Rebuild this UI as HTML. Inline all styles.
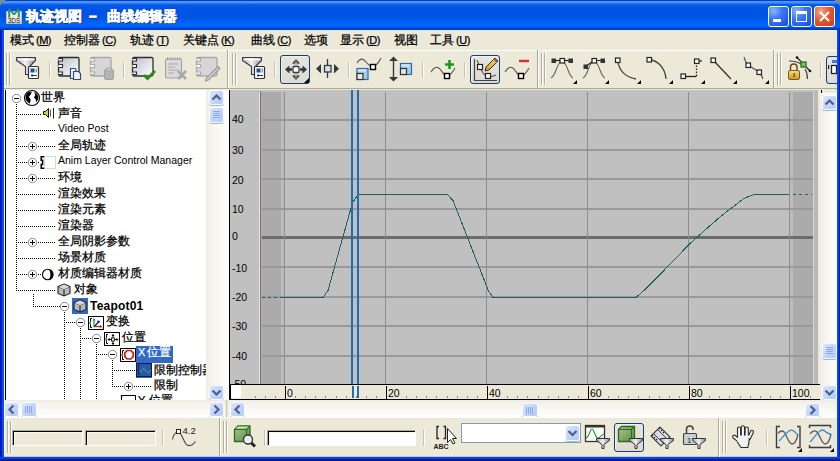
<!DOCTYPE html><html><head><meta charset="utf-8"><style>
*{box-sizing:border-box}
html,body{margin:0;padding:0;width:840px;height:461px;overflow:hidden;background:#808080}
body{position:relative;font-family:"Liberation Sans",sans-serif;font-size:11px;color:#000}
.a{position:absolute}
svg{position:absolute;overflow:visible}
.cj{font-size:12px;line-height:14px;white-space:nowrap;-webkit-text-stroke:0.25px currentColor}
.t11{font-size:10.5px;line-height:13px;white-space:nowrap}
</style></head><body>
<div class="a" style="left:0;top:0;width:840px;height:461px;background:#0a4fe0;border-radius:7px 7px 0 0;overflow:hidden">
<div class="a" style="left:0;top:0;width:840px;height:30px;background:linear-gradient(180deg,#0a3ac0 0px,#0a3ac0 1px,#4c9cff 1px,#3a8cf6 3px,#0c5de8 4.5px,#0054e3 8px,#0054e3 17px,#005ef2 21px,#0066ff 25px,#0062f8 27px,#0048d4 28px,#0036b4 30px)"></div>
<div class="a" style="left:0;top:30px;width:4px;height:431px;background:linear-gradient(90deg,#0014b8 0px,#0020c8 2px,#0050ee 2px,#0852f2 4px)"></div>
<div class="a" style="left:837px;top:30px;width:3px;height:431px;background:linear-gradient(90deg,#0850f0 0px,#0850f0 1px,#0040e0 1px,#0040e0 2px,#0020c0 2px)"></div>
<div class="a" style="left:0;top:457px;width:840px;height:4px;background:linear-gradient(180deg,#0846f0 0px,#0846f0 1px,#0a3ad8 1px,#0a3ad8 2px,#0624a8 2px,#0624a8 3px,#041888 3px)"></div>
</div>
<svg style="left:0;top:0" width="8" height="8"><path d="M0 0H5V1H3V2H2V3H1V5H0Z" fill="#8a8a7a"/></svg>
<svg style="left:832px;top:0" width="8" height="8"><path d="M8 0H3V1H5V2H6V3H7V5H8Z" fill="#8a8a7a"/></svg>
<div class="a" style="left:6px;top:11px;width:16px;height:13px;background:#eeeae0;border:1px solid #c0b8a0"></div>
<svg style="left:6px;top:7px" width="16" height="18"><path d="M3.2 10.5V2L8 7.5L12.8 2V10.5" stroke="#1f9080" stroke-width="1.9" fill="none" stroke-linejoin="bevel"/><text x="8" y="16.3" font-size="6.5" font-family="Liberation Sans" text-anchor="middle" fill="#111">3DS</text></svg>
<div class="a" style="left:26px;top:8px;font-size:14px;font-weight:bold;color:#fff;-webkit-text-stroke:0.6px #fff;text-shadow:1px 1px 0 #0a1e80;line-height:16px;white-space:nowrap">轨迹视图</div>
<div class="a" style="left:89px;top:8px;font-size:14px;font-weight:bold;color:#fff;-webkit-text-stroke:0.6px #fff;text-shadow:1px 1px 0 #0a1e80;line-height:16px;white-space:nowrap">–</div>
<div class="a" style="left:107px;top:8px;font-size:14px;font-weight:bold;color:#fff;-webkit-text-stroke:0.6px #fff;text-shadow:1px 1px 0 #0a1e80;line-height:16px;white-space:nowrap">曲线编辑器</div>
<div class="a" style="left:768px;top:6px;width:21px;height:21px;border:1px solid #fff;border-radius:3px;background:radial-gradient(circle at 25% 20%,#8cb4ff 0%,#3a78f8 40%,#2258e8 80%,#1a4cd8 100%)"></div>
<div class="a" style="left:791px;top:6px;width:21px;height:21px;border:1px solid #fff;border-radius:3px;background:radial-gradient(circle at 25% 20%,#8cb4ff 0%,#3a78f8 40%,#2258e8 80%,#1a4cd8 100%)"></div>
<div class="a" style="left:814px;top:6px;width:21px;height:21px;border:1px solid #fff;border-radius:3px;background:radial-gradient(circle at 30% 25%,#f4a88a 0%,#e25a2e 45%,#c93f16 100%)"></div>
<div class="a" style="left:773px;top:19px;width:8px;height:3px;background:#fff"></div>
<div class="a" style="left:796px;top:11px;width:11px;height:11px;border:1px solid #fff;border-top-width:3px"></div>
<svg style="left:814px;top:6px" width="21" height="21"><path d="M6 6L15 15M15 6L6 15" stroke="#fff" stroke-width="2"/></svg>
<div class="a" style="left:4px;top:30px;width:833px;height:427px;background:#ece9d8"></div>
<div class="a cj" style="left:10px;top:33px">模式<span style="font-size:11px;letter-spacing:-0.5px;margin-left:2px">(<u>M</u>)</span></div>
<div class="a cj" style="left:64px;top:33px">控制器<span style="font-size:11px;letter-spacing:-0.5px;margin-left:2px">(<u>C</u>)</span></div>
<div class="a cj" style="left:130px;top:33px">轨迹<span style="font-size:11px;letter-spacing:-0.5px;margin-left:2px">(<u>T</u>)</span></div>
<div class="a cj" style="left:183px;top:33px">关键点<span style="font-size:11px;letter-spacing:-0.5px;margin-left:2px">(<u>K</u>)</span></div>
<div class="a cj" style="left:251px;top:33px">曲线<span style="font-size:11px;letter-spacing:-0.5px;margin-left:2px">(<u>C</u>)</span></div>
<div class="a cj" style="left:304px;top:33px">选项</div>
<div class="a cj" style="left:340px;top:33px">显示<span style="font-size:11px;letter-spacing:-0.5px;margin-left:2px">(<u>D</u>)</span></div>
<div class="a cj" style="left:394px;top:33px">视图</div>
<div class="a cj" style="left:430px;top:33px">工具<span style="font-size:11px;letter-spacing:-0.5px;margin-left:2px">(<u>U</u>)</span></div>
<div class="a" style="left:4px;top:50px;width:833px;height:1px;background:#fff"></div>
<div class="a" style="left:4px;top:30px;width:1px;height:427px;background:#faf8f0"></div>
<div class="a" style="left:6px;top:53px;width:1px;height:32px;background:#b4b09f"></div>
<div class="a" style="left:7px;top:53px;width:1px;height:32px;background:#fff"></div>
<div class="a" style="left:9px;top:53px;width:1px;height:32px;background:#b4b09f"></div>
<div class="a" style="left:10px;top:53px;width:1px;height:32px;background:#fff"></div>
<div class="a" style="left:49px;top:62px;width:1px;height:16px;background:#c5c2b2"></div>
<div class="a" style="left:50px;top:62px;width:1px;height:16px;background:#fff"></div>
<div class="a" style="left:123px;top:62px;width:1px;height:16px;background:#c5c2b2"></div>
<div class="a" style="left:124px;top:62px;width:1px;height:16px;background:#fff"></div>
<div class="a" style="left:227px;top:50px;width:1px;height:39px;background:#aca899"></div>
<div class="a" style="left:228px;top:50px;width:1px;height:39px;background:#fff"></div>
<div class="a" style="left:232px;top:53px;width:1px;height:32px;background:#b4b09f"></div>
<div class="a" style="left:233px;top:53px;width:1px;height:32px;background:#fff"></div>
<div class="a" style="left:235px;top:53px;width:1px;height:32px;background:#b4b09f"></div>
<div class="a" style="left:236px;top:53px;width:1px;height:32px;background:#fff"></div>
<div class="a" style="left:274px;top:62px;width:1px;height:16px;background:#c5c2b2"></div>
<div class="a" style="left:275px;top:62px;width:1px;height:16px;background:#fff"></div>
<div class="a" style="left:348px;top:62px;width:1px;height:16px;background:#c5c2b2"></div>
<div class="a" style="left:349px;top:62px;width:1px;height:16px;background:#fff"></div>
<div class="a" style="left:537px;top:50px;width:1px;height:39px;background:#aca899"></div>
<div class="a" style="left:538px;top:50px;width:1px;height:39px;background:#fff"></div>
<div class="a" style="left:541px;top:53px;width:1px;height:32px;background:#b4b09f"></div>
<div class="a" style="left:542px;top:53px;width:1px;height:32px;background:#fff"></div>
<div class="a" style="left:544px;top:53px;width:1px;height:32px;background:#b4b09f"></div>
<div class="a" style="left:545px;top:53px;width:1px;height:32px;background:#fff"></div>
<div class="a" style="left:773px;top:50px;width:1px;height:39px;background:#aca899"></div>
<div class="a" style="left:774px;top:50px;width:1px;height:39px;background:#fff"></div>
<div class="a" style="left:777px;top:53px;width:1px;height:32px;background:#b4b09f"></div>
<div class="a" style="left:778px;top:53px;width:1px;height:32px;background:#fff"></div>
<div class="a" style="left:780px;top:53px;width:1px;height:32px;background:#b4b09f"></div>
<div class="a" style="left:781px;top:53px;width:1px;height:32px;background:#fff"></div>
<div class="a" style="left:820px;top:62px;width:1px;height:16px;background:#c5c2b2"></div>
<div class="a" style="left:821px;top:62px;width:1px;height:16px;background:#fff"></div>
<div class="a" style="left:4px;top:88px;width:833px;height:1px;background:#aca899"></div>
<div class="a" style="left:5px;top:90px;width:201px;height:310px;background:#fff;border-left:1px solid #000;overflow:hidden">
<svg style="left:-1px;top:0" width="201" height="310"><g fill="#000"><rect x="11" y="14" width="1" height="1"/><rect x="11" y="16" width="1" height="1"/><rect x="11" y="18" width="1" height="1"/><rect x="11" y="20" width="1" height="1"/><rect x="11" y="22" width="1" height="1"/><rect x="11" y="24" width="1" height="1"/><rect x="11" y="26" width="1" height="1"/><rect x="11" y="28" width="1" height="1"/><rect x="11" y="30" width="1" height="1"/><rect x="11" y="32" width="1" height="1"/><rect x="11" y="34" width="1" height="1"/><rect x="11" y="36" width="1" height="1"/><rect x="11" y="38" width="1" height="1"/><rect x="11" y="40" width="1" height="1"/><rect x="11" y="42" width="1" height="1"/><rect x="11" y="44" width="1" height="1"/><rect x="11" y="46" width="1" height="1"/><rect x="11" y="48" width="1" height="1"/><rect x="11" y="50" width="1" height="1"/><rect x="11" y="52" width="1" height="1"/><rect x="11" y="54" width="1" height="1"/><rect x="11" y="56" width="1" height="1"/><rect x="11" y="58" width="1" height="1"/><rect x="11" y="60" width="1" height="1"/><rect x="11" y="62" width="1" height="1"/><rect x="11" y="64" width="1" height="1"/><rect x="11" y="66" width="1" height="1"/><rect x="11" y="68" width="1" height="1"/><rect x="11" y="70" width="1" height="1"/><rect x="11" y="72" width="1" height="1"/><rect x="11" y="74" width="1" height="1"/><rect x="11" y="76" width="1" height="1"/><rect x="11" y="78" width="1" height="1"/><rect x="11" y="80" width="1" height="1"/><rect x="11" y="82" width="1" height="1"/><rect x="11" y="84" width="1" height="1"/><rect x="11" y="86" width="1" height="1"/><rect x="11" y="88" width="1" height="1"/><rect x="11" y="90" width="1" height="1"/><rect x="11" y="92" width="1" height="1"/><rect x="11" y="94" width="1" height="1"/><rect x="11" y="96" width="1" height="1"/><rect x="11" y="98" width="1" height="1"/><rect x="11" y="100" width="1" height="1"/><rect x="11" y="102" width="1" height="1"/><rect x="11" y="104" width="1" height="1"/><rect x="11" y="106" width="1" height="1"/><rect x="11" y="108" width="1" height="1"/><rect x="11" y="110" width="1" height="1"/><rect x="11" y="112" width="1" height="1"/><rect x="11" y="114" width="1" height="1"/><rect x="11" y="116" width="1" height="1"/><rect x="11" y="118" width="1" height="1"/><rect x="11" y="120" width="1" height="1"/><rect x="11" y="122" width="1" height="1"/><rect x="11" y="124" width="1" height="1"/><rect x="11" y="126" width="1" height="1"/><rect x="11" y="128" width="1" height="1"/><rect x="11" y="130" width="1" height="1"/><rect x="11" y="132" width="1" height="1"/><rect x="11" y="134" width="1" height="1"/><rect x="11" y="136" width="1" height="1"/><rect x="11" y="138" width="1" height="1"/><rect x="11" y="140" width="1" height="1"/><rect x="11" y="142" width="1" height="1"/><rect x="11" y="144" width="1" height="1"/><rect x="11" y="146" width="1" height="1"/><rect x="11" y="148" width="1" height="1"/><rect x="11" y="150" width="1" height="1"/><rect x="11" y="152" width="1" height="1"/><rect x="11" y="154" width="1" height="1"/><rect x="11" y="156" width="1" height="1"/><rect x="11" y="158" width="1" height="1"/><rect x="11" y="160" width="1" height="1"/><rect x="11" y="162" width="1" height="1"/><rect x="11" y="164" width="1" height="1"/><rect x="11" y="166" width="1" height="1"/><rect x="11" y="168" width="1" height="1"/><rect x="11" y="170" width="1" height="1"/><rect x="11" y="172" width="1" height="1"/><rect x="11" y="174" width="1" height="1"/><rect x="11" y="176" width="1" height="1"/><rect x="11" y="178" width="1" height="1"/><rect x="11" y="180" width="1" height="1"/><rect x="11" y="182" width="1" height="1"/><rect x="11" y="184" width="1" height="1"/><rect x="11" y="186" width="1" height="1"/><rect x="11" y="188" width="1" height="1"/><rect x="11" y="190" width="1" height="1"/><rect x="11" y="192" width="1" height="1"/><rect x="11" y="194" width="1" height="1"/><rect x="11" y="196" width="1" height="1"/><rect x="11" y="198" width="1" height="1"/><rect x="11" y="200" width="1" height="1"/><rect x="11" y="24" width="1" height="1"/><rect x="13" y="24" width="1" height="1"/><rect x="15" y="24" width="1" height="1"/><rect x="17" y="24" width="1" height="1"/><rect x="19" y="24" width="1" height="1"/><rect x="21" y="24" width="1" height="1"/><rect x="23" y="24" width="1" height="1"/><rect x="25" y="24" width="1" height="1"/><rect x="27" y="24" width="1" height="1"/><rect x="29" y="24" width="1" height="1"/><rect x="31" y="24" width="1" height="1"/><rect x="33" y="24" width="1" height="1"/><rect x="35" y="24" width="1" height="1"/><rect x="11" y="40" width="1" height="1"/><rect x="13" y="40" width="1" height="1"/><rect x="15" y="40" width="1" height="1"/><rect x="17" y="40" width="1" height="1"/><rect x="19" y="40" width="1" height="1"/><rect x="21" y="40" width="1" height="1"/><rect x="23" y="40" width="1" height="1"/><rect x="25" y="40" width="1" height="1"/><rect x="27" y="40" width="1" height="1"/><rect x="29" y="40" width="1" height="1"/><rect x="31" y="40" width="1" height="1"/><rect x="33" y="40" width="1" height="1"/><rect x="35" y="40" width="1" height="1"/><rect x="37" y="40" width="1" height="1"/><rect x="39" y="40" width="1" height="1"/><rect x="41" y="40" width="1" height="1"/><rect x="43" y="40" width="1" height="1"/><rect x="45" y="40" width="1" height="1"/><rect x="47" y="40" width="1" height="1"/><rect x="49" y="40" width="1" height="1"/><rect x="11" y="56" width="1" height="1"/><rect x="13" y="56" width="1" height="1"/><rect x="15" y="56" width="1" height="1"/><rect x="17" y="56" width="1" height="1"/><rect x="19" y="56" width="1" height="1"/><rect x="21" y="56" width="1" height="1"/><rect x="33" y="56" width="1" height="1"/><rect x="35" y="56" width="1" height="1"/><rect x="37" y="56" width="1" height="1"/><rect x="39" y="56" width="1" height="1"/><rect x="41" y="56" width="1" height="1"/><rect x="43" y="56" width="1" height="1"/><rect x="45" y="56" width="1" height="1"/><rect x="47" y="56" width="1" height="1"/><rect x="49" y="56" width="1" height="1"/><rect x="11" y="72" width="1" height="1"/><rect x="13" y="72" width="1" height="1"/><rect x="15" y="72" width="1" height="1"/><rect x="17" y="72" width="1" height="1"/><rect x="19" y="72" width="1" height="1"/><rect x="21" y="72" width="1" height="1"/><rect x="33" y="72" width="1" height="1"/><rect x="11" y="88" width="1" height="1"/><rect x="13" y="88" width="1" height="1"/><rect x="15" y="88" width="1" height="1"/><rect x="17" y="88" width="1" height="1"/><rect x="19" y="88" width="1" height="1"/><rect x="21" y="88" width="1" height="1"/><rect x="33" y="88" width="1" height="1"/><rect x="35" y="88" width="1" height="1"/><rect x="37" y="88" width="1" height="1"/><rect x="39" y="88" width="1" height="1"/><rect x="41" y="88" width="1" height="1"/><rect x="43" y="88" width="1" height="1"/><rect x="45" y="88" width="1" height="1"/><rect x="47" y="88" width="1" height="1"/><rect x="49" y="88" width="1" height="1"/><rect x="11" y="104" width="1" height="1"/><rect x="13" y="104" width="1" height="1"/><rect x="15" y="104" width="1" height="1"/><rect x="17" y="104" width="1" height="1"/><rect x="19" y="104" width="1" height="1"/><rect x="21" y="104" width="1" height="1"/><rect x="23" y="104" width="1" height="1"/><rect x="25" y="104" width="1" height="1"/><rect x="27" y="104" width="1" height="1"/><rect x="29" y="104" width="1" height="1"/><rect x="31" y="104" width="1" height="1"/><rect x="33" y="104" width="1" height="1"/><rect x="35" y="104" width="1" height="1"/><rect x="37" y="104" width="1" height="1"/><rect x="39" y="104" width="1" height="1"/><rect x="41" y="104" width="1" height="1"/><rect x="43" y="104" width="1" height="1"/><rect x="45" y="104" width="1" height="1"/><rect x="47" y="104" width="1" height="1"/><rect x="49" y="104" width="1" height="1"/><rect x="11" y="120" width="1" height="1"/><rect x="13" y="120" width="1" height="1"/><rect x="15" y="120" width="1" height="1"/><rect x="17" y="120" width="1" height="1"/><rect x="19" y="120" width="1" height="1"/><rect x="21" y="120" width="1" height="1"/><rect x="23" y="120" width="1" height="1"/><rect x="25" y="120" width="1" height="1"/><rect x="27" y="120" width="1" height="1"/><rect x="29" y="120" width="1" height="1"/><rect x="31" y="120" width="1" height="1"/><rect x="33" y="120" width="1" height="1"/><rect x="35" y="120" width="1" height="1"/><rect x="37" y="120" width="1" height="1"/><rect x="39" y="120" width="1" height="1"/><rect x="41" y="120" width="1" height="1"/><rect x="43" y="120" width="1" height="1"/><rect x="45" y="120" width="1" height="1"/><rect x="47" y="120" width="1" height="1"/><rect x="49" y="120" width="1" height="1"/><rect x="11" y="136" width="1" height="1"/><rect x="13" y="136" width="1" height="1"/><rect x="15" y="136" width="1" height="1"/><rect x="17" y="136" width="1" height="1"/><rect x="19" y="136" width="1" height="1"/><rect x="21" y="136" width="1" height="1"/><rect x="23" y="136" width="1" height="1"/><rect x="25" y="136" width="1" height="1"/><rect x="27" y="136" width="1" height="1"/><rect x="29" y="136" width="1" height="1"/><rect x="31" y="136" width="1" height="1"/><rect x="33" y="136" width="1" height="1"/><rect x="35" y="136" width="1" height="1"/><rect x="37" y="136" width="1" height="1"/><rect x="39" y="136" width="1" height="1"/><rect x="41" y="136" width="1" height="1"/><rect x="43" y="136" width="1" height="1"/><rect x="45" y="136" width="1" height="1"/><rect x="47" y="136" width="1" height="1"/><rect x="49" y="136" width="1" height="1"/><rect x="11" y="152" width="1" height="1"/><rect x="13" y="152" width="1" height="1"/><rect x="15" y="152" width="1" height="1"/><rect x="17" y="152" width="1" height="1"/><rect x="19" y="152" width="1" height="1"/><rect x="21" y="152" width="1" height="1"/><rect x="33" y="152" width="1" height="1"/><rect x="35" y="152" width="1" height="1"/><rect x="37" y="152" width="1" height="1"/><rect x="39" y="152" width="1" height="1"/><rect x="41" y="152" width="1" height="1"/><rect x="43" y="152" width="1" height="1"/><rect x="45" y="152" width="1" height="1"/><rect x="47" y="152" width="1" height="1"/><rect x="49" y="152" width="1" height="1"/><rect x="11" y="168" width="1" height="1"/><rect x="13" y="168" width="1" height="1"/><rect x="15" y="168" width="1" height="1"/><rect x="17" y="168" width="1" height="1"/><rect x="19" y="168" width="1" height="1"/><rect x="21" y="168" width="1" height="1"/><rect x="23" y="168" width="1" height="1"/><rect x="25" y="168" width="1" height="1"/><rect x="27" y="168" width="1" height="1"/><rect x="29" y="168" width="1" height="1"/><rect x="31" y="168" width="1" height="1"/><rect x="33" y="168" width="1" height="1"/><rect x="35" y="168" width="1" height="1"/><rect x="37" y="168" width="1" height="1"/><rect x="39" y="168" width="1" height="1"/><rect x="41" y="168" width="1" height="1"/><rect x="43" y="168" width="1" height="1"/><rect x="45" y="168" width="1" height="1"/><rect x="47" y="168" width="1" height="1"/><rect x="49" y="168" width="1" height="1"/><rect x="11" y="184" width="1" height="1"/><rect x="13" y="184" width="1" height="1"/><rect x="15" y="184" width="1" height="1"/><rect x="17" y="184" width="1" height="1"/><rect x="19" y="184" width="1" height="1"/><rect x="21" y="184" width="1" height="1"/><rect x="33" y="184" width="1" height="1"/><rect x="35" y="184" width="1" height="1"/><rect x="11" y="200" width="1" height="1"/><rect x="13" y="200" width="1" height="1"/><rect x="15" y="200" width="1" height="1"/><rect x="17" y="200" width="1" height="1"/><rect x="19" y="200" width="1" height="1"/><rect x="21" y="200" width="1" height="1"/><rect x="23" y="200" width="1" height="1"/><rect x="25" y="200" width="1" height="1"/><rect x="27" y="200" width="1" height="1"/><rect x="29" y="200" width="1" height="1"/><rect x="31" y="200" width="1" height="1"/><rect x="33" y="200" width="1" height="1"/><rect x="35" y="200" width="1" height="1"/><rect x="37" y="200" width="1" height="1"/><rect x="39" y="200" width="1" height="1"/><rect x="41" y="200" width="1" height="1"/><rect x="43" y="200" width="1" height="1"/><rect x="45" y="200" width="1" height="1"/><rect x="47" y="200" width="1" height="1"/><rect x="49" y="200" width="1" height="1"/><rect x="28" y="204" width="1" height="1"/><rect x="28" y="206" width="1" height="1"/><rect x="28" y="208" width="1" height="1"/><rect x="28" y="210" width="1" height="1"/><rect x="28" y="212" width="1" height="1"/><rect x="28" y="214" width="1" height="1"/><rect x="28" y="216" width="1" height="1"/><rect x="28" y="216" width="1" height="1"/><rect x="30" y="216" width="1" height="1"/><rect x="32" y="216" width="1" height="1"/><rect x="34" y="216" width="1" height="1"/><rect x="36" y="216" width="1" height="1"/><rect x="38" y="216" width="1" height="1"/><rect x="40" y="216" width="1" height="1"/><rect x="42" y="216" width="1" height="1"/><rect x="44" y="216" width="1" height="1"/><rect x="46" y="216" width="1" height="1"/><rect x="48" y="216" width="1" height="1"/><rect x="50" y="216" width="1" height="1"/><rect x="52" y="216" width="1" height="1"/><rect x="54" y="216" width="1" height="1"/><rect x="59" y="222" width="1" height="1"/><rect x="59" y="224" width="1" height="1"/><rect x="59" y="226" width="1" height="1"/><rect x="59" y="228" width="1" height="1"/><rect x="59" y="230" width="1" height="1"/><rect x="59" y="232" width="1" height="1"/><rect x="59" y="234" width="1" height="1"/><rect x="59" y="236" width="1" height="1"/><rect x="59" y="238" width="1" height="1"/><rect x="59" y="240" width="1" height="1"/><rect x="59" y="242" width="1" height="1"/><rect x="59" y="244" width="1" height="1"/><rect x="59" y="246" width="1" height="1"/><rect x="59" y="248" width="1" height="1"/><rect x="59" y="250" width="1" height="1"/><rect x="59" y="252" width="1" height="1"/><rect x="59" y="254" width="1" height="1"/><rect x="59" y="256" width="1" height="1"/><rect x="59" y="258" width="1" height="1"/><rect x="59" y="260" width="1" height="1"/><rect x="59" y="262" width="1" height="1"/><rect x="59" y="264" width="1" height="1"/><rect x="59" y="266" width="1" height="1"/><rect x="59" y="268" width="1" height="1"/><rect x="59" y="270" width="1" height="1"/><rect x="59" y="272" width="1" height="1"/><rect x="59" y="274" width="1" height="1"/><rect x="59" y="276" width="1" height="1"/><rect x="59" y="278" width="1" height="1"/><rect x="59" y="280" width="1" height="1"/><rect x="59" y="282" width="1" height="1"/><rect x="59" y="284" width="1" height="1"/><rect x="59" y="286" width="1" height="1"/><rect x="59" y="288" width="1" height="1"/><rect x="59" y="290" width="1" height="1"/><rect x="59" y="292" width="1" height="1"/><rect x="59" y="294" width="1" height="1"/><rect x="59" y="296" width="1" height="1"/><rect x="59" y="298" width="1" height="1"/><rect x="59" y="300" width="1" height="1"/><rect x="59" y="302" width="1" height="1"/><rect x="59" y="304" width="1" height="1"/><rect x="59" y="306" width="1" height="1"/><rect x="59" y="308" width="1" height="1"/><rect x="59" y="310" width="1" height="1"/><rect x="59" y="232" width="1" height="1"/><rect x="61" y="232" width="1" height="1"/><rect x="63" y="232" width="1" height="1"/><rect x="65" y="232" width="1" height="1"/><rect x="67" y="232" width="1" height="1"/><rect x="69" y="232" width="1" height="1"/><rect x="75" y="238" width="1" height="1"/><rect x="75" y="240" width="1" height="1"/><rect x="75" y="242" width="1" height="1"/><rect x="75" y="244" width="1" height="1"/><rect x="75" y="246" width="1" height="1"/><rect x="75" y="248" width="1" height="1"/><rect x="75" y="250" width="1" height="1"/><rect x="75" y="252" width="1" height="1"/><rect x="75" y="254" width="1" height="1"/><rect x="75" y="256" width="1" height="1"/><rect x="75" y="258" width="1" height="1"/><rect x="75" y="260" width="1" height="1"/><rect x="75" y="262" width="1" height="1"/><rect x="75" y="264" width="1" height="1"/><rect x="75" y="266" width="1" height="1"/><rect x="75" y="268" width="1" height="1"/><rect x="75" y="270" width="1" height="1"/><rect x="75" y="272" width="1" height="1"/><rect x="75" y="274" width="1" height="1"/><rect x="75" y="276" width="1" height="1"/><rect x="75" y="278" width="1" height="1"/><rect x="75" y="280" width="1" height="1"/><rect x="75" y="282" width="1" height="1"/><rect x="75" y="284" width="1" height="1"/><rect x="75" y="286" width="1" height="1"/><rect x="75" y="288" width="1" height="1"/><rect x="75" y="290" width="1" height="1"/><rect x="75" y="292" width="1" height="1"/><rect x="75" y="294" width="1" height="1"/><rect x="75" y="296" width="1" height="1"/><rect x="75" y="298" width="1" height="1"/><rect x="75" y="300" width="1" height="1"/><rect x="75" y="302" width="1" height="1"/><rect x="75" y="304" width="1" height="1"/><rect x="75" y="306" width="1" height="1"/><rect x="75" y="308" width="1" height="1"/><rect x="75" y="310" width="1" height="1"/><rect x="75" y="248" width="1" height="1"/><rect x="77" y="248" width="1" height="1"/><rect x="79" y="248" width="1" height="1"/><rect x="81" y="248" width="1" height="1"/><rect x="83" y="248" width="1" height="1"/><rect x="85" y="248" width="1" height="1"/><rect x="91" y="254" width="1" height="1"/><rect x="91" y="256" width="1" height="1"/><rect x="91" y="258" width="1" height="1"/><rect x="91" y="260" width="1" height="1"/><rect x="91" y="262" width="1" height="1"/><rect x="91" y="264" width="1" height="1"/><rect x="91" y="266" width="1" height="1"/><rect x="91" y="268" width="1" height="1"/><rect x="91" y="270" width="1" height="1"/><rect x="91" y="272" width="1" height="1"/><rect x="91" y="274" width="1" height="1"/><rect x="91" y="276" width="1" height="1"/><rect x="91" y="278" width="1" height="1"/><rect x="91" y="280" width="1" height="1"/><rect x="91" y="282" width="1" height="1"/><rect x="91" y="284" width="1" height="1"/><rect x="91" y="286" width="1" height="1"/><rect x="91" y="288" width="1" height="1"/><rect x="91" y="290" width="1" height="1"/><rect x="91" y="292" width="1" height="1"/><rect x="91" y="294" width="1" height="1"/><rect x="91" y="296" width="1" height="1"/><rect x="91" y="298" width="1" height="1"/><rect x="91" y="300" width="1" height="1"/><rect x="91" y="302" width="1" height="1"/><rect x="91" y="304" width="1" height="1"/><rect x="91" y="306" width="1" height="1"/><rect x="91" y="308" width="1" height="1"/><rect x="91" y="310" width="1" height="1"/><rect x="91" y="264" width="1" height="1"/><rect x="93" y="264" width="1" height="1"/><rect x="95" y="264" width="1" height="1"/><rect x="97" y="264" width="1" height="1"/><rect x="99" y="264" width="1" height="1"/><rect x="101" y="264" width="1" height="1"/><rect x="107" y="270" width="1" height="1"/><rect x="107" y="272" width="1" height="1"/><rect x="107" y="274" width="1" height="1"/><rect x="107" y="276" width="1" height="1"/><rect x="107" y="278" width="1" height="1"/><rect x="107" y="280" width="1" height="1"/><rect x="107" y="282" width="1" height="1"/><rect x="107" y="284" width="1" height="1"/><rect x="107" y="286" width="1" height="1"/><rect x="107" y="288" width="1" height="1"/><rect x="107" y="290" width="1" height="1"/><rect x="107" y="292" width="1" height="1"/><rect x="107" y="294" width="1" height="1"/><rect x="107" y="296" width="1" height="1"/><rect x="107" y="280" width="1" height="1"/><rect x="109" y="280" width="1" height="1"/><rect x="111" y="280" width="1" height="1"/><rect x="113" y="280" width="1" height="1"/><rect x="115" y="280" width="1" height="1"/><rect x="117" y="280" width="1" height="1"/><rect x="119" y="280" width="1" height="1"/><rect x="121" y="280" width="1" height="1"/><rect x="123" y="280" width="1" height="1"/><rect x="125" y="280" width="1" height="1"/><rect x="127" y="280" width="1" height="1"/><rect x="129" y="280" width="1" height="1"/><rect x="107" y="296" width="1" height="1"/><rect x="109" y="296" width="1" height="1"/><rect x="111" y="296" width="1" height="1"/><rect x="113" y="296" width="1" height="1"/><rect x="115" y="296" width="1" height="1"/><rect x="117" y="296" width="1" height="1"/><rect x="129" y="296" width="1" height="1"/><rect x="131" y="296" width="1" height="1"/><rect x="133" y="296" width="1" height="1"/><rect x="135" y="296" width="1" height="1"/><rect x="137" y="296" width="1" height="1"/><rect x="139" y="296" width="1" height="1"/><rect x="141" y="296" width="1" height="1"/><rect x="143" y="296" width="1" height="1"/><rect x="145" y="296" width="1" height="1"/><rect x="91" y="312" width="1" height="1"/><rect x="93" y="312" width="1" height="1"/><rect x="95" y="312" width="1" height="1"/><rect x="97" y="312" width="1" height="1"/><rect x="99" y="312" width="1" height="1"/><rect x="101" y="312" width="1" height="1"/><rect x="103" y="312" width="1" height="1"/><rect x="105" y="312" width="1" height="1"/><rect x="107" y="312" width="1" height="1"/><rect x="109" y="312" width="1" height="1"/></g>
<circle cx="11.5" cy="8.5" r="4.2" fill="#fff" stroke="#8a8a8a" stroke-width="1"/><rect x="9" y="8" width="5" height="1" fill="#000"/><circle cx="27.5" cy="56.5" r="4.2" fill="#fff" stroke="#8a8a8a" stroke-width="1"/><rect x="25" y="56" width="5" height="1" fill="#000"/><rect x="27" y="54" width="1" height="5" fill="#000"/><circle cx="27.5" cy="72.5" r="4.2" fill="#fff" stroke="#8a8a8a" stroke-width="1"/><rect x="25" y="72" width="5" height="1" fill="#000"/><rect x="27" y="70" width="1" height="5" fill="#000"/><circle cx="27.5" cy="88.5" r="4.2" fill="#fff" stroke="#8a8a8a" stroke-width="1"/><rect x="25" y="88" width="5" height="1" fill="#000"/><rect x="27" y="86" width="1" height="5" fill="#000"/><circle cx="27.5" cy="152.5" r="4.2" fill="#fff" stroke="#8a8a8a" stroke-width="1"/><rect x="25" y="152" width="5" height="1" fill="#000"/><rect x="27" y="150" width="1" height="5" fill="#000"/><circle cx="27.5" cy="184.5" r="4.2" fill="#fff" stroke="#8a8a8a" stroke-width="1"/><rect x="25" y="184" width="5" height="1" fill="#000"/><rect x="27" y="182" width="1" height="5" fill="#000"/><circle cx="59.5" cy="216.5" r="4.2" fill="#fff" stroke="#8a8a8a" stroke-width="1"/><rect x="57" y="216" width="5" height="1" fill="#000"/><circle cx="75.5" cy="232.5" r="4.2" fill="#fff" stroke="#8a8a8a" stroke-width="1"/><rect x="73" y="232" width="5" height="1" fill="#000"/><circle cx="91.5" cy="248.5" r="4.2" fill="#fff" stroke="#8a8a8a" stroke-width="1"/><rect x="89" y="248" width="5" height="1" fill="#000"/><circle cx="107.5" cy="264.5" r="4.2" fill="#fff" stroke="#8a8a8a" stroke-width="1"/><rect x="105" y="264" width="5" height="1" fill="#000"/><circle cx="123.5" cy="296.5" r="4.2" fill="#fff" stroke="#8a8a8a" stroke-width="1"/><rect x="121" y="296" width="5" height="1" fill="#000"/><rect x="123" y="294" width="1" height="5" fill="#000"/>
</svg>
</div>
<div class="a cj" style="left:41px;top:90px;">世界</div>
<div class="a cj" style="left:58px;top:106px;">声音</div>
<div class="a t11" style="left:58px;top:122px;top:122px">Video Post</div>
<div class="a cj" style="left:58px;top:138px;">全局轨迹</div>
<div class="a t11" style="left:58px;top:154px;top:154px">Anim Layer Control Manager</div>
<div class="a cj" style="left:58px;top:170px;">环境</div>
<div class="a cj" style="left:58px;top:186px;">渲染效果</div>
<div class="a cj" style="left:58px;top:202px;">渲染元素</div>
<div class="a cj" style="left:58px;top:218px;">渲染器</div>
<div class="a cj" style="left:58px;top:234px;">全局阴影参数</div>
<div class="a cj" style="left:58px;top:250px;">场景材质</div>
<div class="a cj" style="left:58px;top:266px;">材质编辑器材质</div>
<div class="a cj" style="left:74px;top:282px;">对象</div>
<div class="a t11" style="left:90px;top:298px;top:300px;font-weight:bold;font-size:12px;letter-spacing:0.2px">Teapot01</div>
<div class="a cj" style="left:106px;top:314px;">变换</div>
<div class="a cj" style="left:122px;top:330px;">位置</div>
<div class="a" style="left:136px;top:346px;width:37px;height:17px;background:#316ac5"></div>
<div class="a cj" style="left:138px;top:346px;color:#fff;top:345px"><span style="font-size:11px;margin-right:2px">X</span>位置</div>
<div class="a" style="left:154px;top:363px;width:52px;height:14px;overflow:hidden"><div class="cj" style="position:absolute;left:0;top:0">限制控制器</div></div>
<div class="a cj" style="left:154px;top:378px;">限制</div>
<div class="a" style="left:138px;top:393px;width:40px;height:7px;overflow:hidden"><div class="cj" style="position:absolute;left:0;top:0"><span style="font-size:11px">Y</span> 位置</div></div>
<svg style="left:23px;top:89px" width="18" height="18"><circle cx="9" cy="9" r="7.5" fill="#fff" stroke="#000" stroke-width="1.2"/><path d="M4.5 3.8C6 2.8 7.5 2.5 8.8 2.8L7.8 5.5L5.8 7.8L7.8 10.8L6.8 14.5C4.5 13.5 2.8 11.5 2.6 9C2.6 7 3.2 5 4.5 3.8Z" fill="#000"/><path d="M11.2 2.8C13.5 3.8 15.2 6 15.3 8.5C15.2 10.5 14.5 12 13 13L12.8 10.5L11 8.5L12.3 6Z" fill="#000"/></svg>
<svg style="left:42px;top:106px" width="14" height="14"><path d="M1.5 5.5H3.5L6.5 2.5V11.5L3.5 8.5H1.5Z" fill="#d8d040" stroke="#111" stroke-width="1"/><rect x="8" y="3.5" width="1" height="7" fill="#555"/><rect x="11" y="2" width="1" height="10.5" fill="#222"/></svg>
<svg style="left:40px;top:156px" width="16" height="13"><rect x="4.5" y="0.5" width="11" height="12" fill="#fff" stroke="#d8d8d8"/><path d="M4.2 0.8H1.2V4.2H2.6V8.6H1.2V12.2H4.2" stroke="#000" stroke-width="1.5" fill="none"/></svg>
<svg style="left:41px;top:268px" width="14" height="14"><circle cx="6.8" cy="6.5" r="5.3" fill="#fff" stroke="#000" stroke-width="1.1"/><path d="M6.8 1.2A5.3 5.3 0 0 1 6.8 11.8A2.6 5.3 0 0 0 6.8 1.2Z" fill="#000"/></svg>
<svg style="left:56px;top:282px" width="16" height="16"><path d="M8 2L14 4.5V11.5L8 14L2 11.5V4.5Z" fill="#b8b8b8" stroke="#222" stroke-width="1.1"/><path d="M2 4.5L8 7L14 4.5M8 7V14" stroke="#222" fill="none" stroke-width="1.1"/><path d="M2.5 5L8 7.3L13.5 5L8 2.6Z" fill="#d8d8d8"/></svg>
<svg style="left:72px;top:298px" width="16" height="16"><rect x="0" y="0" width="16" height="16" fill="#316ac5"/><path d="M8 2L14 4.5V11.5L8 14L2 11.5V4.5Z" fill="#b8b8b8" stroke="#222" stroke-width="1.1"/><path d="M2 4.5L8 7L14 4.5M8 7V14" stroke="#222" fill="none" stroke-width="1.1"/><path d="M2.5 5L8 7.3L13.5 5L8 2.6Z" fill="#d8d8d8"/></svg>
<svg style="left:88px;top:315px" width="16" height="16"><rect x="0.5" y="1.5" width="15" height="13" fill="#fff" stroke="#000"/><path d="M4 3.5H2.5V6.5L1.8 8L2.5 9.5V12.5H4" stroke="#000" fill="none" stroke-width="1"/><path d="M6 12V4.5" stroke="#10a010" stroke-width="1.2"/><path d="M6 3L4.5 5.5H7.5Z" fill="#10a010"/><path d="M6 12L10.5 7" stroke="#1020a0" stroke-width="1.3"/><circle cx="10.5" cy="6.8" r="1.3" fill="#1020a0"/><path d="M6 11.5H13" stroke="#e01010" stroke-width="1.2"/><path d="M14.5 11.5L12 10V13Z" fill="#e01010"/></svg>
<svg style="left:104px;top:331px" width="16" height="16"><rect x="0.5" y="1.5" width="15" height="13" fill="#fff" stroke="#000"/><path d="M4 3.5H2.5V6.5L1.8 8L2.5 9.5V12.5H4" stroke="#000" fill="none" stroke-width="1"/><path d="M9 4V13M4.5 8.5H13.5" stroke="#000"/><path d="M9 2.8L7.5 5H10.5Z M9 14.2L7.5 12H10.5Z M3.3 8.5L5.5 7V10Z M14.7 8.5L12.5 7V10Z" fill="#000"/><rect x="7.5" y="7" width="3" height="3" fill="#fff" stroke="#000" stroke-width="0.8"/></svg>
<svg style="left:120px;top:347px" width="16" height="16"><rect x="0.5" y="1.5" width="15" height="13" fill="#fff" stroke="#000"/><path d="M4 3.5H2.5V6.5L1.8 8L2.5 9.5V12.5H4" stroke="#000" fill="none" stroke-width="1"/><path d="M7.2 3.5H10.8L13.2 5.9V9.6L10.8 12H7.2L4.8 9.6V5.9Z" fill="none" stroke="#e01010" stroke-width="1.7"/></svg>
<svg style="left:136px;top:362px" width="16" height="16"><rect x="0" y="0" width="16" height="16" fill="#316ac5"/><rect x="0.5" y="1.5" width="15" height="13" fill="#2a58a8" stroke="#0a1a40"/><path d="M4 3.5H2.5V6.5L1.8 8L2.5 9.5V12.5H4" stroke="#0a1a40" fill="none" stroke-width="1"/><path d="M4.5 10C6.5 6 8 6 10 9C12 12 13 10 15 8" stroke="#5aa8a0" fill="none"/></svg>
<div class="a" style="left:120px;top:394px;width:16px;height:6px;overflow:hidden">
<svg style="left:0;top:0" width="16" height="16"><rect x="1.5" y="1.5" width="14" height="13" fill="#fff" stroke="#000"/><path d="M4 1.5H1.5V4.5" stroke="#000" fill="none" stroke-width="1.2"/></svg></div>
<div class="a" style="left:206px;top:90px;width:22px;height:310px;background:linear-gradient(90deg,#eeede5 0px,#f3f1ea 3px,#fbfaf6 70%,#fefefe)"></div>
<div class="a" style="left:209px;top:90px;width:15px;height:15px;border-radius:3px;border:1px solid #fbfcff;background:linear-gradient(135deg,#dce6ff 0%,#c6d6fd 45%,#b4c9f8 100%);box-shadow:0 1px 0 #9db4e4"></div>
<svg style="left:0;top:0" width="840" height="461"><path d="M212.5 99.5L216.5 95.5L220.5 99.5" stroke="#4d6185" stroke-width="2.2" fill="none"/></svg>
<div class="a" style="left:209px;top:107px;width:15px;height:16px;border-radius:3px;border:1px solid #fbfcff;background:linear-gradient(135deg,#dce6ff 0%,#c6d6fd 45%,#b4c9f8 100%);box-shadow:0 1px 0 #9db4e4"></div>
<div class="a" style="left:213px;top:111px;width:7px;height:1px;background:#eef4fe;border-bottom:1px solid #8caae6"></div>
<div class="a" style="left:213px;top:113px;width:7px;height:1px;background:#eef4fe;border-bottom:1px solid #8caae6"></div>
<div class="a" style="left:213px;top:115px;width:7px;height:1px;background:#eef4fe;border-bottom:1px solid #8caae6"></div>
<div class="a" style="left:213px;top:117px;width:7px;height:1px;background:#eef4fe;border-bottom:1px solid #8caae6"></div>
<div class="a" style="left:209px;top:385px;width:15px;height:15px;border-radius:3px;border:1px solid #fbfcff;background:linear-gradient(135deg,#dce6ff 0%,#c6d6fd 45%,#b4c9f8 100%);box-shadow:0 1px 0 #9db4e4"></div>
<svg style="left:0;top:0" width="840" height="461"><path d="M212.5 390.5L216.5 394.5L220.5 390.5" stroke="#4d6185" stroke-width="2.2" fill="none"/></svg>
<div class="a" style="left:227px;top:90px;width:2px;height:310px;background:#fdfdfb"></div>
<svg style="left:0;top:0" width="840" height="461"><rect x="229" y="90" width="1" height="294" fill="#000"/><rect x="230" y="90" width="588" height="294" fill="#c0c0c0"/><rect x="259" y="91" width="1" height="293" fill="#e8e4d0"/><rect x="260" y="91" width="1" height="293" fill="#777777"/><rect x="261" y="92" width="20" height="292" fill="#ababab"/><rect x="281" y="92" width="3" height="292" fill="#bcbcbc"/><rect x="790" y="92" width="3" height="292" fill="#bcbcbc"/><rect x="793" y="92" width="20" height="292" fill="#ababab"/><rect x="813" y="91" width="1" height="293" fill="#d4d4d4"/><rect x="814" y="91" width="4" height="293" fill="#b8b8b8"/><rect x="262" y="119" width="551" height="2" fill="#999999"/><rect x="262" y="149" width="551" height="2" fill="#999999"/><rect x="262" y="178" width="551" height="2" fill="#999999"/><rect x="262" y="208" width="551" height="2" fill="#999999"/><rect x="262" y="266" width="551" height="2" fill="#999999"/><rect x="262" y="296" width="551" height="2" fill="#999999"/><rect x="262" y="325" width="551" height="2" fill="#999999"/><rect x="262" y="355" width="551" height="2" fill="#999999"/><rect x="262" y="236" width="551" height="3" fill="#6c6c6c"/><rect x="284" y="92" width="1" height="292" fill="#8e8e8e"/><rect x="385" y="92" width="1" height="292" fill="#8e8e8e"/><rect x="486" y="92" width="1" height="292" fill="#8e8e8e"/><rect x="587" y="92" width="1" height="292" fill="#8e8e8e"/><rect x="688" y="92" width="1" height="292" fill="#8e8e8e"/><rect x="789" y="92" width="1" height="292" fill="#8e8e8e"/><path d="M262 297.5H280" stroke="#235f60" stroke-width="1" stroke-dasharray="3 3" fill="none" shape-rendering="crispEdges"/><path d="M280 297.5H323L328 290.5L351 208L353 202L358 194.5H447.5L453 200.5L488.5 291L493 297.5H636L645 289.5L659 275.5L689 244.5L708 227.5L720 217L730 209L735 205.5L743 199L751 195.5L755 194.5H789" stroke="#235f60" stroke-width="1" fill="none" shape-rendering="crispEdges"/><path d="M793 194.5H812" stroke="#235f60" stroke-width="1" stroke-dasharray="3 3" fill="none" shape-rendering="crispEdges"/><rect x="351" y="90" width="2" height="294" fill="#1f6db0"/><rect x="357" y="90" width="2" height="294" fill="#1f6db0"/></svg>
<div class="a t11" style="left:232px;top:112.5px">40</div>
<div class="a t11" style="left:232px;top:143.5px">30</div>
<div class="a t11" style="left:232px;top:173.5px">20</div>
<div class="a t11" style="left:232px;top:202.5px">10</div>
<div class="a t11" style="left:232px;top:229.5px">0</div>
<div class="a t11" style="left:232px;top:261.5px">-10</div>
<div class="a t11" style="left:232px;top:291px">-20</div>
<div class="a t11" style="left:232px;top:320px">-30</div>
<div class="a t11" style="left:232px;top:350px">-40</div>
<div class="a" style="left:230px;top:380px;width:28px;height:4px;overflow:hidden"><div class="t11" style="position:absolute;left:1px;top:-2.5px">-50</div></div>
<svg style="left:0;top:0" width="840" height="461"><rect x="229" y="384" width="592" height="1" fill="#000"/><rect x="229" y="385" width="592" height="14" fill="#ece9d8"/><rect x="229" y="399" width="592" height="1" fill="#000"/><rect x="229" y="384" width="2" height="16" fill="#000"/><rect x="231" y="385" width="10" height="13" fill="#fff"/><rect x="255" y="396" width="1" height="2" fill="#8a8a8a"/><rect x="265" y="396" width="1" height="2" fill="#8a8a8a"/><rect x="275" y="396" width="1" height="2" fill="#8a8a8a"/><rect x="285" y="386" width="1" height="13" fill="#000"/><rect x="295" y="396" width="1" height="2" fill="#8a8a8a"/><rect x="305" y="396" width="1" height="2" fill="#8a8a8a"/><rect x="315" y="396" width="1" height="2" fill="#8a8a8a"/><rect x="325" y="396" width="1" height="2" fill="#8a8a8a"/><rect x="336" y="396" width="1" height="2" fill="#8a8a8a"/><rect x="346" y="396" width="1" height="2" fill="#8a8a8a"/><rect x="356" y="396" width="1" height="2" fill="#8a8a8a"/><rect x="366" y="396" width="1" height="2" fill="#8a8a8a"/><rect x="376" y="396" width="1" height="2" fill="#8a8a8a"/><rect x="386" y="386" width="1" height="13" fill="#000"/><rect x="406" y="396" width="1" height="2" fill="#8a8a8a"/><rect x="416" y="396" width="1" height="2" fill="#8a8a8a"/><rect x="426" y="396" width="1" height="2" fill="#8a8a8a"/><rect x="436" y="396" width="1" height="2" fill="#8a8a8a"/><rect x="447" y="396" width="1" height="2" fill="#8a8a8a"/><rect x="457" y="396" width="1" height="2" fill="#8a8a8a"/><rect x="467" y="396" width="1" height="2" fill="#8a8a8a"/><rect x="477" y="396" width="1" height="2" fill="#8a8a8a"/><rect x="487" y="386" width="1" height="13" fill="#000"/><rect x="507" y="396" width="1" height="2" fill="#8a8a8a"/><rect x="517" y="396" width="1" height="2" fill="#8a8a8a"/><rect x="527" y="396" width="1" height="2" fill="#8a8a8a"/><rect x="538" y="396" width="1" height="2" fill="#8a8a8a"/><rect x="548" y="396" width="1" height="2" fill="#8a8a8a"/><rect x="558" y="396" width="1" height="2" fill="#8a8a8a"/><rect x="568" y="396" width="1" height="2" fill="#8a8a8a"/><rect x="578" y="396" width="1" height="2" fill="#8a8a8a"/><rect x="588" y="386" width="1" height="13" fill="#000"/><rect x="608" y="396" width="1" height="2" fill="#8a8a8a"/><rect x="618" y="396" width="1" height="2" fill="#8a8a8a"/><rect x="628" y="396" width="1" height="2" fill="#8a8a8a"/><rect x="638" y="396" width="1" height="2" fill="#8a8a8a"/><rect x="649" y="396" width="1" height="2" fill="#8a8a8a"/><rect x="659" y="396" width="1" height="2" fill="#8a8a8a"/><rect x="669" y="396" width="1" height="2" fill="#8a8a8a"/><rect x="679" y="396" width="1" height="2" fill="#8a8a8a"/><rect x="689" y="386" width="1" height="13" fill="#000"/><rect x="709" y="396" width="1" height="2" fill="#8a8a8a"/><rect x="719" y="396" width="1" height="2" fill="#8a8a8a"/><rect x="729" y="396" width="1" height="2" fill="#8a8a8a"/><rect x="740" y="396" width="1" height="2" fill="#8a8a8a"/><rect x="750" y="396" width="1" height="2" fill="#8a8a8a"/><rect x="760" y="396" width="1" height="2" fill="#8a8a8a"/><rect x="770" y="396" width="1" height="2" fill="#8a8a8a"/><rect x="780" y="396" width="1" height="2" fill="#8a8a8a"/><rect x="790" y="386" width="1" height="13" fill="#000"/><rect x="810" y="396" width="1" height="2" fill="#8a8a8a"/><rect x="352" y="386" width="2" height="12" fill="#1f6db0"/><rect x="357" y="386" width="2" height="12" fill="#1f6db0"/></svg>
<div class="a t11" style="left:287px;top:387px">0</div>
<div class="a t11" style="left:388px;top:387px">20</div>
<div class="a t11" style="left:489px;top:387px">40</div>
<div class="a t11" style="left:590px;top:387px">60</div>
<div class="a t11" style="left:691px;top:387px">80</div>
<div class="a t11" style="left:792px;top:387px">100</div>
<div class="a" style="left:820px;top:90px;width:17px;height:310px;background:linear-gradient(90deg,#eeede5 0px,#f3f1ea 3px,#fbfaf6 70%,#fefefe)"></div>
<div class="a" style="left:818px;top:90px;width:2px;height:294px;background:#ece9d8"></div>
<div class="a" style="left:820px;top:90px;width:17px;height:3px;background:#ece9d8"></div>
<div class="a" style="left:820px;top:93px;width:17px;height:1px;background:#fff"></div>
<div class="a" style="left:821px;top:90px;width:1px;height:3px;background:#000"></div>
<div class="a" style="left:822px;top:95px;width:15px;height:15px;border-radius:3px;border:1px solid #fbfcff;background:linear-gradient(135deg,#dce6ff 0%,#c6d6fd 45%,#b4c9f8 100%);box-shadow:0 1px 0 #9db4e4"></div>
<svg style="left:0;top:0" width="840" height="461"><path d="M825.5 104.5L829.5 100.5L833.5 104.5" stroke="#4d6185" stroke-width="2.2" fill="none"/></svg>
<div class="a" style="left:822px;top:343px;width:15px;height:16px;border-radius:3px;border:1px solid #fbfcff;background:linear-gradient(135deg,#dce6ff 0%,#c6d6fd 45%,#b4c9f8 100%);box-shadow:0 1px 0 #9db4e4"></div>
<div class="a" style="left:826px;top:347px;width:7px;height:1px;background:#eef4fe;border-bottom:1px solid #8caae6"></div>
<div class="a" style="left:826px;top:349px;width:7px;height:1px;background:#eef4fe;border-bottom:1px solid #8caae6"></div>
<div class="a" style="left:826px;top:351px;width:7px;height:1px;background:#eef4fe;border-bottom:1px solid #8caae6"></div>
<div class="a" style="left:826px;top:353px;width:7px;height:1px;background:#eef4fe;border-bottom:1px solid #8caae6"></div>
<div class="a" style="left:822px;top:385px;width:15px;height:15px;border-radius:3px;border:1px solid #fbfcff;background:linear-gradient(135deg,#dce6ff 0%,#c6d6fd 45%,#b4c9f8 100%);box-shadow:0 1px 0 #9db4e4"></div>
<svg style="left:0;top:0" width="840" height="461"><path d="M825.5 390.5L829.5 394.5L833.5 390.5" stroke="#4d6185" stroke-width="2.2" fill="none"/></svg>
<div class="a" style="left:4px;top:400px;width:221px;height:17px;background:linear-gradient(180deg,#eeede5 0px,#f3f1ea 3px,#fbfaf6 70%,#fefefe)"></div>
<div class="a" style="left:4px;top:402px;width:15px;height:15px;border-radius:3px;border:1px solid #fbfcff;background:linear-gradient(135deg,#dce6ff 0%,#c6d6fd 45%,#b4c9f8 100%);box-shadow:0 1px 0 #9db4e4"></div>
<svg style="left:0;top:0" width="840" height="461"><path d="M13.5 405.5L9.5 409.5L13.5 413.5" stroke="#4d6185" stroke-width="2.2" fill="none"/></svg>
<div class="a" style="left:21px;top:402px;width:16px;height:15px;border-radius:3px;border:1px solid #fbfcff;background:linear-gradient(135deg,#dce6ff 0%,#c6d6fd 45%,#b4c9f8 100%);box-shadow:0 1px 0 #9db4e4"></div>
<div class="a" style="left:25px;top:406px;width:1px;height:7px;background:#eef4fe;border-right:1px solid #8caae6"></div>
<div class="a" style="left:27px;top:406px;width:1px;height:7px;background:#eef4fe;border-right:1px solid #8caae6"></div>
<div class="a" style="left:29px;top:406px;width:1px;height:7px;background:#eef4fe;border-right:1px solid #8caae6"></div>
<div class="a" style="left:31px;top:406px;width:1px;height:7px;background:#eef4fe;border-right:1px solid #8caae6"></div>
<div class="a" style="left:209px;top:402px;width:15px;height:15px;border-radius:3px;border:1px solid #fbfcff;background:linear-gradient(135deg,#dce6ff 0%,#c6d6fd 45%,#b4c9f8 100%);box-shadow:0 1px 0 #9db4e4"></div>
<svg style="left:0;top:0" width="840" height="461"><path d="M214.5 405.5L218.5 409.5L214.5 413.5" stroke="#4d6185" stroke-width="2.2" fill="none"/></svg>
<div class="a" style="left:225px;top:400px;width:4px;height:17px;background:#ece9d8"></div>
<div class="a" style="left:226px;top:400px;width:1px;height:17px;background:#cdc9b8"></div>
<div class="a" style="left:229px;top:400px;width:608px;height:17px;background:linear-gradient(180deg,#eeede5 0px,#f3f1ea 3px,#fbfaf6 70%,#fefefe)"></div>
<div class="a" style="left:230px;top:402px;width:15px;height:15px;border-radius:3px;border:1px solid #fbfcff;background:linear-gradient(135deg,#dce6ff 0%,#c6d6fd 45%,#b4c9f8 100%);box-shadow:0 1px 0 #9db4e4"></div>
<svg style="left:0;top:0" width="840" height="461"><path d="M239.5 405.5L235.5 409.5L239.5 413.5" stroke="#4d6185" stroke-width="2.2" fill="none"/></svg>
<div class="a" style="left:522px;top:403px;width:16px;height:14px;border-radius:3px;border:1px solid #fbfcff;background:linear-gradient(135deg,#dce6ff 0%,#c6d6fd 45%,#b4c9f8 100%);box-shadow:0 1px 0 #9db4e4"></div>
<div class="a" style="left:526px;top:407px;width:1px;height:7px;background:#eef4fe;border-right:1px solid #8caae6"></div>
<div class="a" style="left:528px;top:407px;width:1px;height:7px;background:#eef4fe;border-right:1px solid #8caae6"></div>
<div class="a" style="left:530px;top:407px;width:1px;height:7px;background:#eef4fe;border-right:1px solid #8caae6"></div>
<div class="a" style="left:532px;top:407px;width:1px;height:7px;background:#eef4fe;border-right:1px solid #8caae6"></div>
<div class="a" style="left:805px;top:403px;width:15px;height:14px;border-radius:3px;border:1px solid #fbfcff;background:linear-gradient(135deg,#dce6ff 0%,#c6d6fd 45%,#b4c9f8 100%);box-shadow:0 1px 0 #9db4e4"></div>
<svg style="left:0;top:0" width="840" height="461"><path d="M810.5 406.0L814.5 410.0L810.5 414.0" stroke="#4d6185" stroke-width="2.2" fill="none"/></svg>
<div class="a" style="left:4px;top:417px;width:833px;height:1px;background:#fff"></div>
<div class="a" style="left:4px;top:456px;width:833px;height:1px;background:#cfc8b4"></div>
<div class="a" style="left:7px;top:421px;width:1px;height:32px;background:#b4b09f"></div>
<div class="a" style="left:8px;top:421px;width:1px;height:32px;background:#fff"></div>
<div class="a" style="left:10px;top:421px;width:1px;height:32px;background:#b4b09f"></div>
<div class="a" style="left:11px;top:421px;width:1px;height:32px;background:#fff"></div>
<div class="a" style="left:12px;top:430px;width:71px;height:16px;background:#ece9d8;border-top:1px solid #aca899;border-left:1px solid #aca899;border-bottom:1px solid #fff;border-right:1px solid #fff;box-shadow:inset 1px 1px 0 #000,inset 2px 2px 0 #f8f6ee"></div>
<div class="a" style="left:85px;top:430px;width:71px;height:16px;background:#ece9d8;border-top:1px solid #aca899;border-left:1px solid #aca899;border-bottom:1px solid #fff;border-right:1px solid #fff;box-shadow:inset 1px 1px 0 #000,inset 2px 2px 0 #f8f6ee"></div>
<div class="a" style="left:162px;top:430px;width:1px;height:16px;background:#c5c2b2"></div>
<div class="a" style="left:163px;top:430px;width:1px;height:16px;background:#fff"></div>
<div class="a" style="left:219px;top:418px;width:1px;height:38px;background:#aca899"></div>
<div class="a" style="left:220px;top:418px;width:1px;height:38px;background:#fff"></div>
<div class="a" style="left:223px;top:421px;width:1px;height:32px;background:#b4b09f"></div>
<div class="a" style="left:224px;top:421px;width:1px;height:32px;background:#fff"></div>
<div class="a" style="left:226px;top:421px;width:1px;height:32px;background:#b4b09f"></div>
<div class="a" style="left:227px;top:421px;width:1px;height:32px;background:#fff"></div>
<div class="a" style="left:264px;top:430px;width:1px;height:16px;background:#c5c2b2"></div>
<div class="a" style="left:265px;top:430px;width:1px;height:16px;background:#fff"></div>
<div class="a" style="left:267px;top:430px;width:149px;height:16px;background:#fff;border-top:1px solid #aca899;border-left:1px solid #aca899;border-bottom:1px solid #fff;border-right:1px solid #fff;box-shadow:inset 1px 1px 0 #000,inset 2px 2px 0 #f8f6ee"></div>
<div class="a" style="left:423px;top:430px;width:1px;height:16px;background:#c5c2b2"></div>
<div class="a" style="left:424px;top:430px;width:1px;height:16px;background:#fff"></div>
<div class="a" style="left:461px;top:423px;width:120px;height:20px;background:#fff;border:1px solid #7f9db9"></div>
<div class="a" style="left:565px;top:425px;width:15px;height:16px;border-radius:3px;border:1px solid #fbfcff;background:linear-gradient(135deg,#dce6ff 0%,#c6d6fd 45%,#b4c9f8 100%);box-shadow:0 1px 0 #9db4e4"></div>
<svg style="left:0;top:0" width="840" height="461"><path d="M568.5 431.0L572.5 435.0L576.5 431.0" stroke="#4d6185" stroke-width="2.2" fill="none"/></svg>
<div class="a" style="left:718px;top:418px;width:1px;height:39px;background:#aca899"></div>
<div class="a" style="left:719px;top:418px;width:1px;height:39px;background:#fff"></div>
<div class="a" style="left:722px;top:421px;width:1px;height:32px;background:#b4b09f"></div>
<div class="a" style="left:723px;top:421px;width:1px;height:32px;background:#fff"></div>
<div class="a" style="left:725px;top:421px;width:1px;height:32px;background:#b4b09f"></div>
<div class="a" style="left:726px;top:421px;width:1px;height:32px;background:#fff"></div>
<div class="a" style="left:766px;top:430px;width:1px;height:16px;background:#c5c2b2"></div>
<div class="a" style="left:767px;top:430px;width:1px;height:16px;background:#fff"></div>
<svg style="left:0;top:0" width="0" height="0"><defs>
<linearGradient id="gdoc" x1="0" y1="0" x2="1" y2="1"><stop offset="0" stop-color="#b8bcc4"/><stop offset="0.6" stop-color="#e4e6ea"/><stop offset="1" stop-color="#fafafa"/></linearGradient>
<linearGradient id="gfun" x1="0" y1="0" x2="1" y2="0"><stop offset="0" stop-color="#9a9ea6"/><stop offset="0.45" stop-color="#f4f4f4"/><stop offset="1" stop-color="#8a8e96"/></linearGradient>
<linearGradient id="gpress" x1="0" y1="0" x2="0" y2="1"><stop offset="0" stop-color="#e3e2da"/><stop offset="1" stop-color="#dcdad0"/></linearGradient>
<linearGradient id="ggreen" x1="0" y1="0" x2="1" y2="1"><stop offset="0" stop-color="#a8c890"/><stop offset="1" stop-color="#5e8a48"/></linearGradient>
<linearGradient id="ggold" x1="0" y1="0" x2="0" y2="1"><stop offset="0" stop-color="#f8e070"/><stop offset="1" stop-color="#c89820"/></linearGradient>
</defs></svg>
<svg style="left:15px;top:56px" width="26" height="26"><path d="M1.5 1.5H20.5V4.5L14.5 10.5V18.5H10.5V10.5L1.5 4.5Z" fill="url(#gfun)" stroke="#333a44" stroke-width="1.1" stroke-linejoin="round"/><rect x="2.5" y="2.5" width="17" height="2" fill="#fff" opacity="0.8"/><rect x="13.5" y="10.5" width="10" height="12" rx="1" fill="#fff" stroke="#2a3240" stroke-width="1.2"/><rect x="15.5" y="12.5" width="4" height="4" fill="#1f4f9a"/><rect x="20.5" y="12.5" width="1.5" height="4" fill="#999"/><path d="M16 19.5H22M16 19.5L17.5 18.5M16 19.5L17.5 20.5" stroke="#2a3240" stroke-width="1" fill="none"/></svg>
<svg style="left:241px;top:56px" width="26" height="26"><path d="M1.5 1.5H20.5V4.5L14.5 10.5V18.5H10.5V10.5L1.5 4.5Z" fill="url(#gfun)" stroke="#333a44" stroke-width="1.1" stroke-linejoin="round"/><rect x="2.5" y="2.5" width="17" height="2" fill="#fff" opacity="0.8"/><rect x="13.5" y="10.5" width="10" height="12" rx="1" fill="#fff" stroke="#2a3240" stroke-width="1.2"/><rect x="15.5" y="12.5" width="4" height="4" fill="#1f4f9a"/><rect x="20.5" y="12.5" width="1.5" height="4" fill="#999"/><path d="M16 19.5H22M16 19.5L17.5 18.5M16 19.5L17.5 20.5" stroke="#2a3240" stroke-width="1" fill="none"/></svg>
<svg style="left:57px;top:56px" width="26" height="26"><rect x="1.5" y="1.5" width="20.5" height="18.5" rx="1.5" fill="url(#gdoc)" stroke="#2a2e36" stroke-width="1.3"/><path d="M1.5 2.5H5.5V5H1.5M1.5 8.5H5.5V11.5H1.5M1.5 16H5.5V18.5H1.5" fill="#fff" stroke="#2a2e36" stroke-width="1.1"/><path d="M13.5 12.5H18L19 13.5V22.5H13.5Z" fill="#fff" stroke="#2b4a80" stroke-width="1.2"/><path d="M16.5 15.5H21.5L23.5 17.5V23.5H16.5Z" fill="#f0f2f6" stroke="#2b4a80" stroke-width="1.2"/></svg>
<svg style="left:89px;top:56px" width="26" height="26"><rect x="1.5" y="1.5" width="20.5" height="18.5" rx="1.5" fill="#d6d6d6" stroke="#a8a8a8" stroke-width="1.3"/><path d="M1.5 2.5H5.5V5H1.5M1.5 8.5H5.5V11.5H1.5M1.5 16H5.5V18.5H1.5" fill="#fff" stroke="#a8a8a8" stroke-width="1.1"/><rect x="15.5" y="13.5" width="9" height="10" rx="1.5" fill="#b4b4b4" stroke="#a0a0a0"/><rect x="17.5" y="12" width="5" height="3" rx="1" fill="#d0d0d0" stroke="#a0a0a0"/></svg>
<svg style="left:131px;top:56px" width="26" height="26"><rect x="1.5" y="1.5" width="20.5" height="18.5" rx="1.5" fill="url(#gdoc)" stroke="#2a2e36" stroke-width="1.3"/><path d="M1.5 2.5H5.5V5H1.5M1.5 8.5H5.5V11.5H1.5M1.5 16H5.5V18.5H1.5" fill="#fff" stroke="#2a2e36" stroke-width="1.1"/><path d="M13 19L16.5 22.5L24 15" stroke="#2a8a1a" stroke-width="2.8" fill="none"/></svg>
<svg style="left:164px;top:56px" width="26" height="26"><rect x="1.5" y="3" width="16" height="19" rx="1" fill="#dadada" stroke="#a4a4a4" stroke-width="1.1"/><path d="M3.5 1.5V4M6 1.5V4M8.5 1.5V4M11 1.5V4M13.5 1.5V4M16 1.5V4" stroke="#999"/><path d="M4 8H14M4 11H11M4 14H14M4 17H10" stroke="#aaa" stroke-width="1.1"/><path d="M14 15L22 23M22 15L14 23" stroke="#a8a8a8" stroke-width="2.6"/></svg>
<svg style="left:195px;top:56px" width="26" height="26"><rect x="1.5" y="1.5" width="20.5" height="18.5" rx="1.5" fill="#d6d6d6" stroke="#a8a8a8" stroke-width="1.3"/><path d="M1.5 2.5H5.5V5H1.5M1.5 8.5H5.5V11.5H1.5M1.5 16H5.5V18.5H1.5" fill="#fff" stroke="#a8a8a8" stroke-width="1.1"/><path d="M23 10.5L25 12.5L13.5 24L10.5 25L11.5 22Z" fill="#d0d0d0" stroke="#9a9a9a" stroke-width="1.1"/></svg>
<div class="a" style="left:280px;top:55px;width:30px;height:29px;border:1px solid #0f3f80;border-radius:3px;box-shadow:inset 1px 1px 0 #f4f0e4;background:linear-gradient(180deg,#e6e5de,#dddbd0)"></div>
<svg style="left:304px;top:78px" width="6" height="6"><path d="M5 0V5H0Z" fill="#000"/></svg>
<svg style="left:280px;top:55px" width="30" height="29"><path d="M16 4L20 8.5H17.2V12M16 4L12 8.5H14.8V12Z" fill="#33393f"/><path d="M16 25L20 20.5H17.2V17M16 25L12 20.5H14.8V17Z" fill="#33393f"/><path d="M5 14.5L9.5 10.5V13.3H12V15.7H9.5V18.5Z" fill="#33393f"/><path d="M27 14.5L22.5 10.5V13.3H20V15.7H22.5V18.5Z" fill="#33393f"/><rect x="13" y="11.5" width="6" height="6" rx="1" fill="#fff" stroke="#33393f" stroke-width="1.3"/></svg>
<svg style="left:314px;top:56px" width="28" height="26"><path d="M13.5 3V22" stroke="#33393f" stroke-width="1.3"/><rect x="10.5" y="9.5" width="6.5" height="6.5" fill="#dde0e6" stroke="#33393f" stroke-width="1.3"/><path d="M2 12.7L7 8V17.5Z M25 12.7L20 8V17.5Z" fill="#33393f"/></svg>
<svg style="left:355px;top:56px" width="30" height="26"><path d="M2 7C5 2 8 2 11 6C14 10 17 12 22 8C24 6 25 4 26 2" stroke="#555" stroke-width="1.1" fill="none"/><rect x="15.5" y="8.5" width="5" height="5" fill="#fff" stroke="#000" stroke-width="1.4"/><rect x="2.0" y="12.5" width="11" height="11" fill="#a8cce8" stroke="#2a6ab8" stroke-width="1.2"/><rect x="3.0" y="13.5" width="8" height="2" fill="#d8ecf8"/><rect x="2.0" y="17.5" width="6" height="6" fill="#e8e8ea" stroke="#333" stroke-width="1.2"/></svg>
<svg style="left:388px;top:55px" width="26" height="28"><path d="M5.5 4V24" stroke="#33393f" stroke-width="1.4"/><path d="M5.5 1.5L10 6H1Z M5.5 26.5L10 22H1Z" fill="#33393f"/><rect x="12.5" y="8.5" width="11" height="11" fill="#a8cce8" stroke="#2a6ab8" stroke-width="1.2"/><rect x="13.5" y="9.5" width="8" height="2" fill="#d8ecf8"/><rect x="12.5" y="13.5" width="6" height="6" fill="#e8e8ea" stroke="#333" stroke-width="1.2"/></svg>
<div class="a" style="left:422px;top:62px;width:1px;height:16px;background:#c5c2b2"></div>
<div class="a" style="left:423px;top:62px;width:1px;height:16px;background:#fff"></div>
<svg style="left:429px;top:56px" width="28" height="26"><path d="M2 16C5 11 8 10 11 13C14 17 16 21 19 20C22 19 24 15 26 12" stroke="#555" stroke-width="1.1" fill="none"/><rect x="15.5" y="17.5" width="5" height="5" fill="#fff" stroke="#000" stroke-width="1.4"/><path d="M16 8.5H25M20.5 4V13" stroke="#1a9a1a" stroke-width="2.6"/></svg>
<div class="a" style="left:464px;top:62px;width:1px;height:16px;background:#c5c2b2"></div>
<div class="a" style="left:465px;top:62px;width:1px;height:16px;background:#fff"></div>
<div class="a" style="left:470px;top:55px;width:30px;height:29px;border:1px solid #0f3f80;border-radius:3px;box-shadow:inset 1px 1px 0 #f4f0e4;background:linear-gradient(180deg,#e6e5de,#dddbd0)"></div>
<svg style="left:470px;top:55px" width="30" height="29"><path d="M4.5 4V25.5H27" stroke="#444" stroke-width="1.2" fill="none"/><path d="M7 5C9 9 10 14 13 18C16 22 20 23 26 20" stroke="#555" stroke-width="1.1" fill="none"/><rect x="7.5" y="9.5" width="5" height="5" fill="#fff" stroke="#222" stroke-width="1.2"/><rect x="15.5" y="18.5" width="5" height="5" fill="#fff" stroke="#222" stroke-width="1.2"/><path d="M25 3L28 6L19 15L15 16L16 12Z" fill="url(#ggold)" stroke="#333" stroke-width="1"/><path d="M24 4L27 7" stroke="#c05050" stroke-width="2"/></svg>
<svg style="left:503px;top:56px" width="28" height="26"><path d="M2 16C5 11 8 10 11 13C14 17 16 21 19 20C22 19 24 15 26 12" stroke="#555" stroke-width="1.1" fill="none"/><rect x="15.5" y="17.5" width="5" height="5" fill="#fff" stroke="#000" stroke-width="1.4"/><path d="M16 5H26" stroke="#d03030" stroke-width="2.4"/></svg>
<svg style="left:548px;top:55px" width="30" height="30"><path d="M3 23C8 21 9 6 14 6C19 6 20 21 25 23" stroke="#666" stroke-width="1.1" fill="none"/><path d="M5.5 5.5H22.5" stroke="#222" stroke-width="1.2"/><rect x="3.5" y="3.5" width="4.5" height="4.5" fill="#333"/><rect x="20.5" y="3.5" width="4.5" height="4.5" fill="#333"/><rect x="12" y="3.5" width="4.5" height="4.5" fill="#fff" stroke="#222" stroke-width="1.2"/><path d="M29 25V29H25Z" fill="#000"/></svg>
<svg style="left:580px;top:55px" width="30" height="30"><path d="M3 23C8 21 9 6 14 6C19 6 20 21 25 23" stroke="#666" stroke-width="1.1" fill="none"/><path d="M5.5 11.5L14 5.5H22.5" stroke="#222" stroke-width="1.2" fill="none"/><rect x="3.5" y="9.5" width="4.5" height="4.5" fill="#333"/><rect x="20.5" y="3.5" width="4.5" height="4.5" fill="#333"/><rect x="12" y="3.5" width="4.5" height="4.5" fill="#fff" stroke="#222" stroke-width="1.2"/><path d="M29 25V29H25Z" fill="#000"/></svg>
<svg style="left:612px;top:55px" width="30" height="30"><path d="M5.5 5.5C7 15 13 22 24 24" stroke="#444" stroke-width="1.3" fill="none"/><rect x="3.5" y="3" width="4.5" height="4.5" fill="#fff" stroke="#222" stroke-width="1.2"/><path d="M29 25V29H25Z" fill="#000"/></svg>
<svg style="left:644px;top:55px" width="30" height="30"><path d="M5.5 5C13 5 21 12 22 24" stroke="#444" stroke-width="1.3" fill="none"/><rect x="3" y="2.5" width="4.5" height="4.5" fill="#fff" stroke="#222" stroke-width="1.2"/><path d="M29 25V29H25Z" fill="#000"/></svg>
<svg style="left:676px;top:55px" width="30" height="30"><path d="M7 21.5H20.5" stroke="#222" stroke-width="1.3"/><path d="M20.5 21V7" stroke="#222" stroke-width="1.3" stroke-dasharray="1.5 1.5"/><path d="M20.5 6H26" stroke="#222" stroke-width="1.2"/><rect x="5" y="19" width="4.5" height="4.5" fill="#fff" stroke="#222" stroke-width="1.2"/><rect x="18.5" y="4" width="4.5" height="4.5" fill="#fff" stroke="#222" stroke-width="1.2"/><path d="M29 25V29H25Z" fill="#000"/></svg>
<svg style="left:708px;top:55px" width="30" height="30"><path d="M5 5L23 24" stroke="#333" stroke-width="1.3"/><rect x="3" y="3" width="4.5" height="4.5" fill="#fff" stroke="#222" stroke-width="1.2"/><path d="M29 25V29H25Z" fill="#000"/></svg>
<svg style="left:740px;top:55px" width="30" height="30"><path d="M4 2C5 6 7 9 8 10L19 17C21 19 22 21 23 24" stroke="#555" stroke-width="1.1" fill="none"/><rect x="6" y="8" width="4.5" height="4.5" fill="#fff" stroke="#222" stroke-width="1.2"/><rect x="17" y="15" width="4.5" height="4.5" fill="#fff" stroke="#222" stroke-width="1.2"/><path d="M29 25V29H25Z" fill="#000"/></svg>
<svg style="left:784px;top:55px" width="30" height="30"><path d="M6.5 15V12C6.5 8 13 8 13 12V15" stroke="#6a4a1a" stroke-width="1.5" fill="none"/><rect x="4.5" y="15.5" width="11" height="9" rx="1.5" fill="url(#ggold)" stroke="#7a5a20" stroke-width="1"/><rect x="9.5" y="18" width="1.3" height="4" fill="#6a4a1a"/><path d="M5 6C10 6 14 7 17 9" stroke="#444" stroke-width="1.2" fill="none"/><path d="M13 2.5L26 16" stroke="#222" stroke-width="1.1"/><circle cx="13" cy="2.5" r="1.3" fill="#111"/><circle cx="26" cy="16" r="1.3" fill="#111"/><path d="M21 14C23 17 23.5 20 23.5 24" stroke="#444" stroke-width="1.2" fill="none"/><rect x="17" y="7" width="5" height="5" fill="#8ab868" stroke="#1a7a1a" stroke-width="1.3"/></svg>
<div class="a" style="left:826px;top:56px;width:20px;height:28px;border:1px solid #0f3f80;border-radius:3px;background:linear-gradient(180deg,#e6e5de,#dddbd0)"></div>
<svg style="left:826px;top:55px" width="11" height="29"><rect x="6" y="5" width="6" height="3" fill="#3a7ad8"/><rect x="5.5" y="10.5" width="5" height="8" fill="#fff" stroke="#222" stroke-width="1.3"/><rect x="2" y="10" width="1.2" height="4" fill="#222"/></svg>
<div class="a" style="left:837px;top:30px;width:3px;height:427px;background:linear-gradient(90deg,#0850f0 0px,#0850f0 1px,#0040e0 1px,#0040e0 2px,#0020c0 2px)"></div>
<svg style="left:170px;top:424px" width="30" height="26"><path d="M2.5 15.5C3 12 5 8.5 8.2 7.5C11 8 13 16 16 20C18 22.5 22 22.5 25.5 17.5" stroke="#444" stroke-width="1.1" fill="none"/><rect x="6.5" y="5.5" width="4" height="4" fill="#fff" stroke="#222" stroke-width="1"/><text x="12.5" y="9.5" font-size="9.5" font-family="Liberation Sans" fill="#222">4.2</text></svg>
<svg style="left:231px;top:423px" width="28" height="28"><path d="M3.5 6.5L7 3H19V14.5L15.5 18.5H3.5Z" fill="url(#ggreen)" stroke="#2a6a1a" stroke-width="1.3" stroke-linejoin="round"/><path d="M3.5 6.5H15.5V18.5M15.5 6.5L19 3" stroke="#2a6a1a" stroke-width="1.1" fill="none"/><path d="M4.5 5.5L7.5 3.5H18L15 5.5Z" fill="#c8e0b0"/><path d="M20 19.5L24 23.5" stroke="#222" stroke-width="3"/><circle cx="17" cy="16.5" r="4.5" fill="#e8eef4" stroke="#333" stroke-width="1.3"/></svg>
<svg style="left:430px;top:423px" width="30" height="30"><path d="M9 3.5H7V15.5H9M13.5 3.5H15.5V15.5H13.5" stroke="#222" stroke-width="1.3" fill="none"/><path d="M17.5 5.5V19.5L20.5 16.5L23 21L25 20L22.5 15.5H26.5Z" fill="#fff" stroke="#222" stroke-width="1"/><text x="3.5" y="25.5" font-size="7" font-weight="bold" font-family="Liberation Sans" fill="#222">ABC</text></svg>
<svg style="left:583px;top:423px" width="28" height="28"><rect x="2.5" y="2.5" width="19" height="16" fill="#fff" stroke="#333" stroke-width="1.3"/><rect x="2.5" y="2.5" width="19" height="2" fill="#333"/><path d="M3 15C6 15 7 6 9 6C11 6 12 15 15 15C17 15 18 12 21 11" stroke="#2aa02a" stroke-width="1.2" fill="none"/><path d="M13.5 15.5H26.5V17.5L21 21.5V25.5H19V21.5L13.5 17.5Z" fill="url(#gfun)" stroke="#333" stroke-width="1"/></svg>
<div class="a" style="left:614px;top:423px;width:30px;height:29px;border:1px solid #0f3f80;border-radius:3px;box-shadow:inset 1px 1px 0 #f4f0e4;background:linear-gradient(180deg,#e6e5de,#dddbd0)"></div>
<svg style="left:614px;top:423px" width="30" height="29"><path d="M4.5 6.5L7.5 3.5H20.5V15.5L17.5 18.5H4.5Z" fill="url(#ggreen)" stroke="#2a6a1a" stroke-width="1.3" stroke-linejoin="round"/><path d="M4.5 6.5H17.5V18.5M17.5 6.5L20.5 3.5" stroke="#2a6a1a" stroke-width="1.1" fill="none"/><path d="M15.5 15.5H28.5V17.5L23 21.5V25.5H21V21.5L15.5 17.5Z" fill="url(#gfun)" stroke="#333" stroke-width="1"/></svg>
<svg style="left:648px;top:423px" width="28" height="28"><path d="M3 13L12 4L22 14L13 23Z" fill="#d8dce0" stroke="#444" stroke-width="1.2"/><path d="M5.5 10.5L15 20M9.5 6.5L19 16" stroke="#444" stroke-width="1"/><path d="M4 13L5 12M6 15L7 14M8 17L9 16M11 6L12 5M13 8L14 7M15 10L16 9" stroke="#222" stroke-width="1.2"/><path d="M12.5 15.5H25.5V17.5L20 21.5V25.5H18V21.5L12.5 17.5Z" fill="url(#gfun)" stroke="#333" stroke-width="1"/></svg>
<svg style="left:680px;top:423px" width="28" height="28"><path d="M6.5 10V6C6.5 2 13 2 13 6V7" stroke="#444" stroke-width="1.6" fill="none"/><rect x="3.5" y="10.5" width="13" height="11" rx="1" fill="#c8d0cc" stroke="#444" stroke-width="1.1"/><text x="7" y="20" font-size="8" font-family="Liberation Sans" fill="#222">1</text><path d="M12.5 15.5H25.5V17.5L20 21.5V25.5H18V21.5L12.5 17.5Z" fill="url(#gfun)" stroke="#333" stroke-width="1"/></svg>
<svg style="left:728px;top:422px" width="32" height="30"><g fill="#f8f8f8" stroke="#2a2a2a" stroke-width="1.1"><rect x="9.5" y="5" width="3.2" height="13" rx="1.6"/><rect x="13.3" y="3.8" width="3.2" height="14" rx="1.6"/><rect x="17.1" y="5" width="3.2" height="13" rx="1.6"/><rect x="21" y="8" width="3" height="10" rx="1.5" transform="rotate(25 22.5 13)"/><rect x="4" y="15" width="9" height="3.2" rx="1.6" transform="rotate(40 8.5 16.6)"/></g><path d="M10 13.5H21.3L20.8 21L19.5 25H13.2L9.5 20Z" fill="#f0f0f0"/><path d="M9.3 20L13 25.5H19.8L20.8 21.5L21.3 16" stroke="#2a2a2a" stroke-width="1.1" fill="none"/></svg>
<svg style="left:770px;top:420px" width="70" height="36"><path d="M10 6.5H6.5V27.5H10M27 6.5H30V27.5H27" stroke="#3a3e44" stroke-width="1.4" fill="none"/><path d="M8 13.5C10 10.5 13 10 15 13C17 17 19 24 22 24C25 24 27 19 28 14" stroke="#555a60" stroke-width="1.3" fill="none"/><path d="M9 21C12 18 16 13 19 11C21 9.5 23 10 25 12C26 14 27 14.5 28 14.5" stroke="#3a8ad8" stroke-width="1.3" fill="none"/><path d="M32 28V32H28Z" fill="#000"/><path d="M39.5 8V5.5H60.5V8M39.5 25V27.5H60.5V25" stroke="#3a3e44" stroke-width="1.4" fill="none"/><path d="M40 14C42 11 45 10 47 12C50 16 52 24 55 24C58 24 60 19 61 14" stroke="#555a60" stroke-width="1.3" fill="none"/><path d="M40 22C43 19 47 13 50 11C52 9 54 10 56 12C57 13 59 14 61 14" stroke="#3a8ad8" stroke-width="1.3" fill="none"/><path d="M64 28V32H60Z" fill="#000"/></svg>
</body></html>
